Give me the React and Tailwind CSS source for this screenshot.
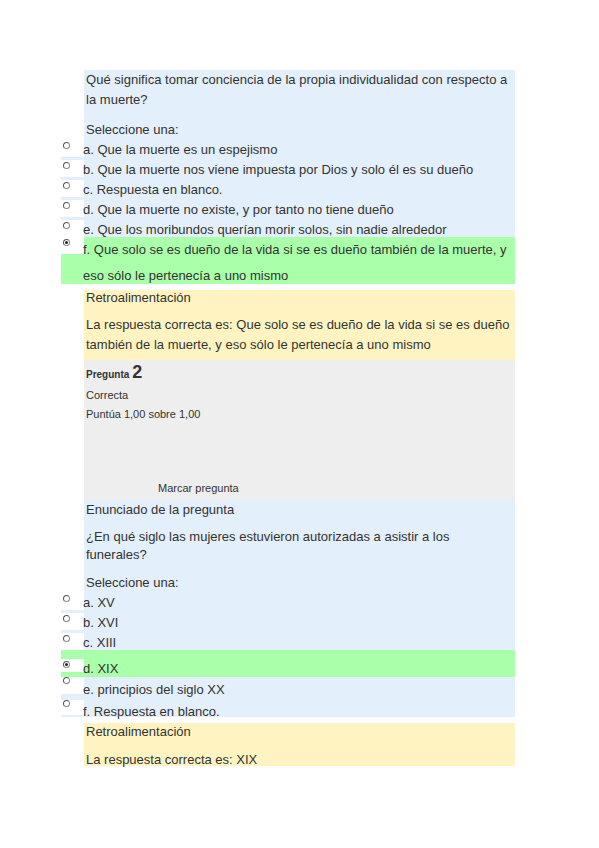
const BLUE = 'bg-[#e3effa]';

function Radio({ checked }) {
  return (
    <div className="relative w-[7px] h-[7px] rounded-full border border-[#8a8a8a] border-t-[#555] border-l-[#555] bg-white">
      {checked && <div className="absolute left-[1px] top-[1px] w-[3px] h-[3px] rounded-full bg-[#222]" />}
    </div>
  );
}

function Option({ label, h, pt = 0, leading = 'leading-[20px]', cellTop = 0, cellH = 17, radioTop = 2, checked, green }) {
  return (
    <div className={`flex ${green ? 'bg-[#aaffaa]' : BLUE}`} style={{ height: h }}>
      <div className="w-[23px] shrink-0">
        <div className="bg-white pl-[2px]" style={{ marginTop: cellTop, height: cellH, paddingTop: radioTop }}>
          <Radio checked={checked} />
        </div>
      </div>
      <div className={`text-[13px] ${leading} text-[#333] -ml-px whitespace-pre-line`} style={{ paddingTop: pt }}>
        {label}
      </div>
    </div>
  );
}

export default function App() {
  return (
    <div className="w-[599px] h-[848px] bg-white font-['Liberation_Sans',Arial,sans-serif]">
      <div className="pt-[70px] pl-[61px] w-[515px]">
        {/* pregunta 1 */}
        <div className={`ml-[23px] ${BLUE} pl-[2px] text-[13px] text-[#333]`}>
          <p className="leading-[20px] tracking-[0.02px]">Qué significa tomar conciencia de la propia individualidad con respecto a la muerte?</p>
          <p className="leading-[20px] mt-[10px]">Seleccione una:</p>
        </div>
        <Option label="a. Que la muerte es un espejismo" h={20} />
        <Option label="b. Que la muerte nos viene impuesta por Dios y solo él es su dueño" h={20} />
        <Option label="c. Respuesta en blanco." h={20} />
        <Option label="d. Que la muerte no existe, y por tanto no tiene dueño" h={20} />
        <Option label="e. Que los moribundos querían morir solos, sin nadie alrededor" h={17} />
        <Option
          label={'f. Que solo se es dueño de la vida si se es dueño también de la muerte, y\neso sólo le pertenecía a uno mismo'}
          h={47}
          leading="leading-[26px]"
          checked
          green
        />
        <div className="h-[6px]" />
        <div className="ml-[23px] bg-[#fff3c2] text-[13px] text-[#333] pl-[2px]">
          <p className="leading-[16px]">Retroalimentación</p>
          <p className="leading-[20px] mt-[9px] pb-[5px]">
            La respuesta correcta es: Que solo se es dueño de la vida si se es dueño también de la muerte, y eso sólo le pertenecía a uno mismo
          </p>
        </div>

        {/* info pregunta 2 */}
        <div className="ml-[23px] bg-[#eeeeee] h-[140px] pl-[2px] text-[#333] flex flex-col">
          <div className="flex items-baseline gap-[3px] pt-[3px] leading-[18px]">
            <span className="text-[10px] font-bold">Pregunta</span>
            <span className="text-[18px] font-semibold">2</span>
          </div>
          <p className="text-[11px] leading-[16px] mt-[3px]">Correcta</p>
          <p className="text-[11px] leading-[16px] mt-[3px]">Puntúa 1,00 sobre 1,00</p>
          <div className="flex mt-[58px]">
            <div className="w-[72px]" />
            <p className="text-[11px] leading-[16px]">Marcar pregunta</p>
          </div>
        </div>

        {/* pregunta 2 */}
        <div className={`ml-[23px] ${BLUE} pl-[2px] text-[13px] text-[#333]`}>
          <p className="leading-[20px]">Enunciado de la pregunta</p>
          <p className="leading-[18px] mt-[8px] pr-[40px]">¿En qué siglo las mujeres estuvieron autorizadas a asistir a los funerales?</p>
          <p className="leading-[20px] mt-[9px]">Seleccione una:</p>
        </div>
        <Option label="a. XV" h={20} />
        <Option label="b. XVI" h={20} />
        <Option label="c. XIII" h={17} />
        <Option label="d. XIX" h={27} pt={9} cellTop={9} cellH={13} checked green />
        <Option label="e. principios del siglo XX" h={23} pt={3} radioTop={0} />
        <Option label="f. Respuesta en blanco." h={17} pt={2} cellH={15} radioTop={0} />
        <div className="h-[6px]" />
        <div className="ml-[23px] bg-[#fff3c2] text-[13px] text-[#333] pl-[2px] h-[43px]">
          <p className="leading-[16px] pt-[1px]">Retroalimentación</p>
          <p className="leading-[20px] mt-[10px]">La respuesta correcta es: XIX</p>
        </div>
      </div>
    </div>
  );
}
